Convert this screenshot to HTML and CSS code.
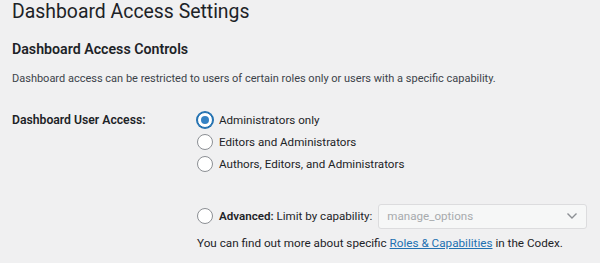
FILE: index.html
```html
<!DOCTYPE html>
<html>
<head>
	<title>Dashboard Access Settings</title>
	<link rel="stylesheet" href="styles.css">
</head>
<body>
	<div class="wrap">
		<h1>Dashboard Access Settings</h1>
		<h2>Dashboard Access Controls</h2>
		<p class="intro">Dashboard access can be restricted to users of certain roles only or users with a specific capability.</p>

		<div class="form-row">
			<div class="row-label">Dashboard User Access:</div>
			<div class="row-field">
				<label class="option"><input type="radio" name="access" checked> Administrators only</label>
				<label class="option"><input type="radio" name="access"> Editors and Administrators</label>
				<label class="option"><input type="radio" name="access"> Authors, Editors, and Administrators</label>

				<div class="option advanced">
					<input type="radio" name="access">
					<span class="cap-label"><b>Advanced:</b> Limit by capability:</span>
					<div class="select">
						<span>manage_options</span>
						<svg width="12" height="8" viewBox="0 0 12 8"><path d="M1.5 1.5 6 6l4.5-4.5" fill="none" stroke="#8c8f94" stroke-width="1.4"/></svg>
					</div>
				</div>
				<p class="help">You can find out more about specific <a href="#">Roles &amp; Capabilities</a> in the Codex.</p>
			</div>
		</div>
	</div>
</body>
</html>
```

FILE: styles.css
```css
body {
	margin: 0;
	padding: 0;
	background-color: #f0f0f1;
	color: #1d2327;
	font-family: Roboto, "Noto Sans", sans-serif;
	font-size: 12px;
}

.wrap {
	padding: 0 12px;
}

h1 {
	font-size: 19.4px;
	font-weight: 400;
	line-height: 24px;
	margin: 0;
	padding: 0;
}

h2 {
	font-size: 14.2px;
	font-weight: 600;
	margin: 15px 0 0;
	line-height: 20px;
}

.intro {
	margin: 11px 0 0;
	font-size: 11px;
	color: #3c434a;
	line-height: 18px;
}

.form-row {
	display: flex;
	margin-top: 21px;
}

.row-label {
	width: 185px;
	font-size: 12.2px;
	font-weight: 600;
	line-height: 18px;
	padding-top: 2px;
}

.row-field {
	flex: 1;
}

.option {
	display: flex;
	align-items: center;
	gap: 6px;
	height: 22px;
	font-size: 11.6px;
	color: #1d2327;
}

input[type="radio"] {
	appearance: none;
	width: 16px;
	height: 16px;
	margin: 0;
	border: 1px solid #8c8f94;
	border-radius: 50%;
	background-color: #fff;
	flex-shrink: 0;
	display: grid;
	place-items: center;
}

input[type="radio"]:checked {
	border-color: #2271b1;
	box-shadow: 0 0 0 1px #2271b1;
}

input[type="radio"]:checked::before {
	content: "";
	width: 8px;
	height: 8px;
	border-radius: 50%;
	background-color: #3582c4;
}

.advanced {
	margin-top: 28px;
	height: 26px;
}

.cap-label {
	white-space: nowrap;
}

.advanced b {
	font-weight: 600;
}

.select {
	display: flex;
	align-items: center;
	justify-content: space-between;
	width: 209px;
	height: 25px;
	box-sizing: border-box;
	padding: 0 8px;
	border: 1px solid #dcdcde;
	border-radius: 3px;
	background-color: #f6f7f7;
	color: #a7aaad;
	flex-shrink: 0;
}

.help {
	margin: 5px 0 0;
	font-size: 11.7px;
	line-height: 18px;
}

.help a {
	color: #2271b1;
}
```
